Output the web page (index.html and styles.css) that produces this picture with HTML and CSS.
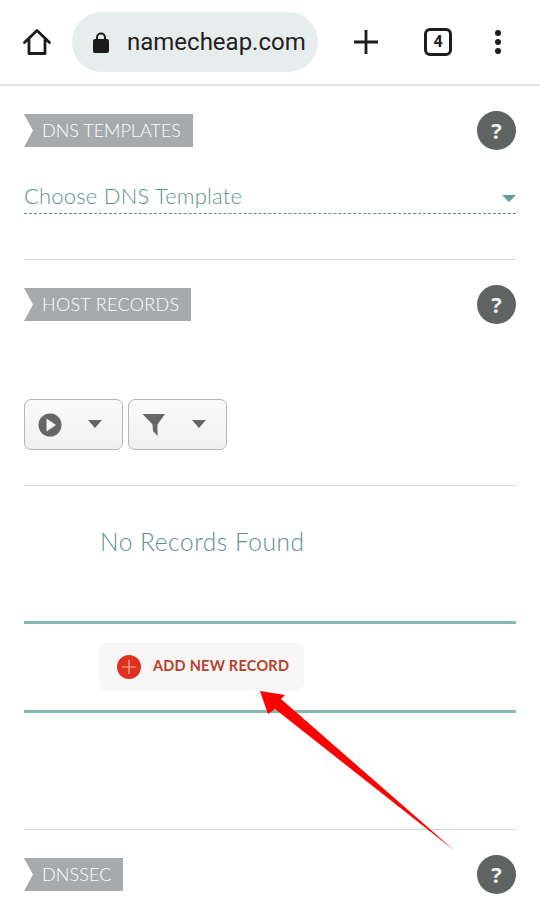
FILE: index.html

```html
<!DOCTYPE html>
<html lang="en">
<head>
  <meta charset="UTF-8">
  <title>namecheap.com</title>
  <link rel="stylesheet" href="styles.css">
</head>
<body>
  <header class="toolbar">
    <svg class="home-icon" width="30" height="30" viewBox="0 0 30 30">
      <path d="M2.500 15.500 15 3.500l12.500 12M7 12.500V26.500h16V12.500" fill="none" stroke="#1c1c1c" stroke-width="2.800" stroke-linejoin="round" stroke-linecap="round"/>
    </svg>
    <div class="omnibox">
      <svg width="16" height="21" viewBox="0 0 16 21">
        <path d="M4 8V5.500a4 4 0 0 1 8 0V8" fill="none" stroke="#1c1c1c" stroke-width="2"/>
        <rect x="0" y="7" width="16" height="14" rx="2" fill="#1c1c1c"/>
      </svg>
      <span class="url">namecheap.com</span>
    </div>
    <svg class="plus-icon" width="26" height="26" viewBox="0 0 26 26">
      <path d="M13 1v24M1 13h24" stroke="#1c1c1c" stroke-width="2.800"/>
    </svg>
    <div class="tab-count">4</div>
    <svg class="more-icon" width="10" height="26" viewBox="0 0 10 26">
      <circle cx="5" cy="4" r="3" fill="#1c1c1c"/>
      <circle cx="5" cy="13" r="3" fill="#1c1c1c"/>
      <circle cx="5" cy="22" r="3" fill="#1c1c1c"/>
    </svg>
  </header>

  <main class="content">
    <section class="section-head head-templates">
      <h2 class="tag tag-templates">DNS TEMPLATES</h2>
      <span class="help">?</span>
    </section>
    <div class="select">
      <span>Choose DNS Template</span>
      <i class="select-caret"></i>
    </div>
    <hr class="rule rule-templates">

    <section class="section-head head-host">
      <h2 class="tag tag-host">HOST RECORDS</h2>
      <span class="help">?</span>
    </section>
    <div class="toolbar-btns">
      <button class="tool-btn">
        <svg width="24" height="24" viewBox="0 0 24 24">
          <circle cx="12" cy="12" r="11.500" fill="#666"/>
          <path d="M8.500 5.500 18 12l-9.500 6.500z" fill="#f6f6f6"/>
        </svg>
        <i class="btn-caret"></i>
      </button>
      <button class="tool-btn">
        <svg width="24" height="24" viewBox="0 0 24 24">
          <path d="M0.500 1h22.500L15.500 11.500 15.500 23 11 18 10.500 11.500z" fill="#666"/>
        </svg>
        <i class="btn-caret"></i>
      </button>
    </div>
    <hr class="rule rule-host">
    <p class="empty">No Records Found</p>

    <div class="add-band">
      <button class="add-btn">
        <svg width="24" height="24" viewBox="0 0 24 24">
          <circle cx="12" cy="12" r="12" fill="#e0301e"/>
          <path d="M12 5v14M5 12h14" stroke="#f5b5a8" stroke-width="1.200"/>
        </svg>
        <span class="add-label">ADD NEW RECORD</span>
      </button>
    </div>
    <hr class="rule rule-band">

    <section class="section-head head-dnssec">
      <h2 class="tag">DNSSEC</h2>
      <span class="help">?</span>
    </section>
  </main>

  <svg class="arrow" width="540" height="924" viewBox="0 0 540 924">
    <path d="M260 691 285 695 281 699 455 851 275 709 268 714z" fill="#fe0000"/>
  </svg>
</body>
</html>
```

FILE: styles.css

```css
html, body {
  margin: 0;
  padding: 0;
}
body {
  width: 540px;
  height: 924px;
  overflow: hidden;
  background-color: #fff;
  font-family: "Lato", "Open Sans", sans-serif;
  position: relative;
}
.toolbar {
  height: 84px;
  border-bottom: 2px solid #e0e4dc;
  display: flex;
  align-items: center;
  padding-left: 22px;
}
.home-icon {
  flex: none;
}
.omnibox {
  width: 246px;
  height: 60px;
  margin-left: 20px;
  border-radius: 30px;
  background-color: #e7ecec;
  display: flex;
  align-items: center;
  padding-left: 21px;
  box-sizing: border-box;
}
.url {
  margin-left: 18px;
  font-family: "Roboto", sans-serif;
  font-size: 24px;
  color: #222;
  white-space: nowrap;
}
.plus-icon {
  margin-left: 35px;
}
.tab-count {
  width: 22px;
  height: 22px;
  margin-left: 45px;
  border: 3px solid #1c1c1c;
  border-radius: 6px;
  text-align: center;
  font-family: "Roboto", sans-serif;
  font-weight: 700;
  font-size: 16px;
  line-height: 22px;
  color: #1c1c1c;
}
.more-icon {
  margin-left: 41px;
}
.content {
  padding: 0 24px;
}
.section-head {
  display: flex;
  justify-content: space-between;
  align-items: center;
  height: 39px;
}
.head-templates {
  margin-top: 25px;
}
.head-host {
  margin-top: 25px;
}
.head-dnssec {
  margin-top: 25px;
}
.tag {
  margin: 0;
  height: 33px;
  padding: 0 12px 0 18px;
  background-color: #a7aaad;
  color: #fff;
  font-size: 18px;
  font-weight: 300;
  line-height: 33px;
  letter-spacing: 0.1px;
  clip-path: polygon(0 0, 100% 0, 100% 100%, 0 100%, 9px 50%);
}
.tag-templates {
  letter-spacing: 0;
}
.tag-host {
  letter-spacing: 0.3px;
}
.help {
  width: 39px;
  height: 39px;
  border-radius: 50%;
  background-color: #5f6362;
  color: #f2f2f2;
  font-family: "Open Sans", sans-serif;
  font-weight: 700;
  font-size: 22px;
  line-height: 39px;
  text-align: center;
}
.select {
  margin-top: 30px;
  height: 30px;
  padding-bottom: 3px;
  border-bottom: 1px dashed #5f8f8c;
  display: flex;
  justify-content: space-between;
  align-items: center;
  color: #5f918d;
  font-size: 22px;
  font-weight: 300;
  letter-spacing: 0.2px;
}
.select-caret {
  width: 0;
  height: 0;
  border-left: 7px solid transparent;
  border-right: 7px solid transparent;
  border-top: 7px solid #5f9c9a;
  margin-top: 6px;
}
.rule {
  margin: 0;
  border: 0;
  height: 1px;
  background-color: #d5d5d5;
}
.rule-templates {
  margin-top: 45px;
}
.toolbar-btns {
  display: flex;
  gap: 5px;
  margin-top: 75px;
}
.tool-btn {
  width: 99px;
  height: 51px;
  padding: 0 0 0 13px;
  border: 1px solid #b5b5b5;
  border-radius: 7px;
  background: linear-gradient(#fbfbfb, #f0f0f0);
  display: flex;
  align-items: center;
  box-sizing: border-box;
}
.btn-caret {
  width: 0;
  height: 0;
  margin-left: 26px;
  margin-top: -2px;
  border-left: 7.500px solid transparent;
  border-right: 7.500px solid transparent;
  border-top: 8px solid #666;
}
.rule-host {
  margin-top: 35px;
}
.empty {
  margin: 39px 0 0 76px;
  height: 33px;
  line-height: 33px;
  font-size: 24.500px;
  font-weight: 300;
  letter-spacing: 0.55px;
  color: #5f918d;
  white-space: nowrap;
}
.add-band {
  margin-top: 63px;
  height: 86px;
  border-top: 3px solid #84b8b0;
  border-bottom: 3px solid #84b8b0;
  padding-left: 75px;
  display: flex;
  align-items: center;
}
.add-btn {
  width: 205px;
  height: 48px;
  padding: 0 0 0 18px;
  border: 0;
  border-radius: 8px;
  background-color: #f7f7f7;
  display: flex;
  align-items: center;
  gap: 12px;
  color: #b93f2c;
  font-family: "Lato", sans-serif;
  font-weight: 700;
  font-size: 14.500px;
  letter-spacing: 0.25px;
  white-space: nowrap;
}
.add-label {
  margin-bottom: 3px;
}
.rule-band {
  margin-top: 116px;
}
.arrow {
  position: absolute;
  top: 0;
  left: 0;
  pointer-events: none;
}
```
